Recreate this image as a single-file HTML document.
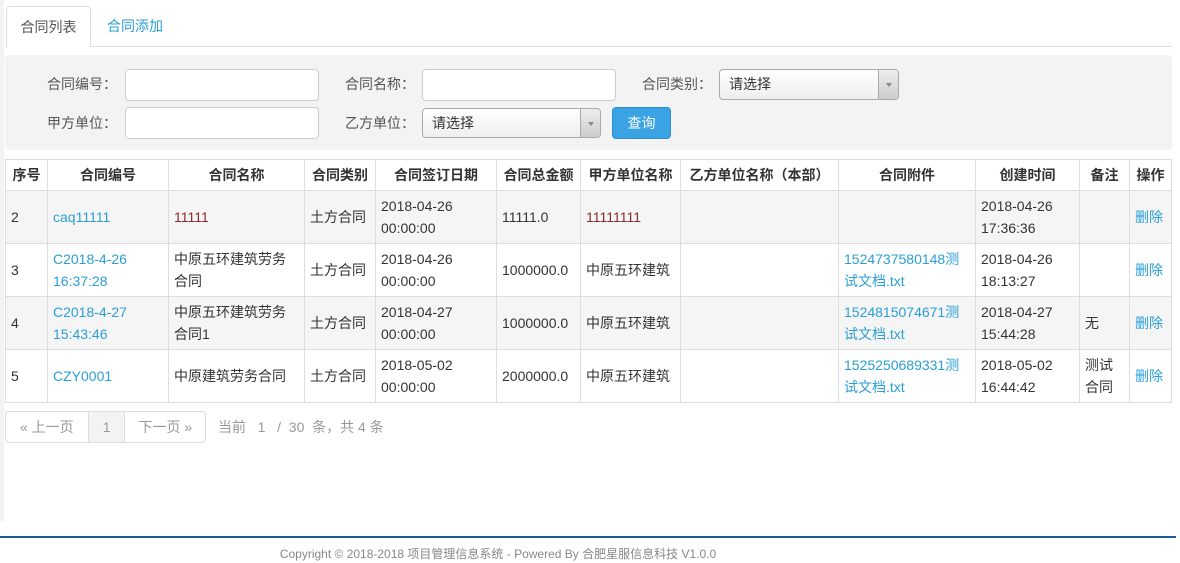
<!DOCTYPE html><html><head><meta charset="utf-8"><style>
*{box-sizing:border-box;margin:0;padding:0}
body{width:1180px;height:563px;background:#fff;font-family:"Liberation Sans","Noto Sans CJK SC",sans-serif;font-size:14px;color:#333;position:relative;overflow:hidden}
.a{position:absolute}
.strip{left:0;top:0;width:4px;height:521px;background:#f3f3f3}
.tab{top:6px;left:6px;width:85px;height:41px;border:1px solid #ddd;border-bottom:none;border-radius:4px 4px 0 0;background:#fff;text-align:center;line-height:40px;color:#555;z-index:2}
.tab2{top:6px;left:107px;line-height:40px;color:#2a9fd6}
.tline{top:46px;left:6px;width:1166px;height:1px;background:#ddd}
.panel{left:5px;top:55px;width:1167px;height:95px;background:#f3f3f3;border-radius:4px}
.lbl{color:#555;text-align:right;width:90px}
.inp{background:#fff;border:1px solid #ccc;border-radius:4px}
.sel{background:linear-gradient(#fff,#eee);border:1px solid #aaa;border-radius:4px;padding-left:9px;line-height:28px;color:#333}
.sel i{position:absolute;right:0;top:0;width:20px;height:100%;border-left:1px solid #aaa;background:linear-gradient(#eee,#ccc);border-radius:0 4px 4px 0}
.sel i:after{content:"";position:absolute;left:7px;top:13px;border:3px solid transparent;border-top:4px solid #888}
.btn{left:612px;top:107px;width:59px;height:32px;background:#3aa3e3;border:1px solid #2b8fcf;border-radius:4px;color:#fff;text-align:center;line-height:30px}
table{position:absolute;left:5px;top:159px;width:1167px;border-collapse:collapse;border:1px solid #ddd}
td,th{border:1px solid #ddd;padding:0 5px;font-size:14px;line-height:22px;vertical-align:middle;text-align:left}
th{height:31px;font-weight:bold;text-align:center;color:#333;background:#fff}
td{height:53px}
tr.g td{background:#f5f5f5}
.l{color:#2a9fd6}.r{color:#8b2a2a}
.pg{top:411px;left:5px;height:32px;border:1px solid #ddd;border-radius:4px;display:flex;color:#999}
.pg div{line-height:30px;padding:0 13px;border-right:1px solid #ddd}
.pi{top:412px;left:218px;color:#999;line-height:30px}
.foot{left:0;top:536px;width:1176px;height:2px;background:#1f5c93}
.ft{top:545px;left:0;width:996px;text-align:center;font-size:12px;color:#888}
</style></head><body>
<div class="a strip"></div>
<div class="a tline"></div>
<div class="a tab">合同列表</div>
<div class="a tab2">合同添加</div>
<div class="a panel"></div>
<div class="a lbl" style="left:27px;top:74px">合同编号：</div>
<div class="a inp" style="left:125px;top:69px;width:194px;height:32px"></div>
<div class="a lbl" style="left:325px;top:74px">合同名称：</div>
<div class="a inp" style="left:422px;top:69px;width:194px;height:32px"></div>
<div class="a lbl" style="left:622px;top:74px">合同类别：</div>
<div class="a sel" style="left:719px;top:69px;width:180px;height:31px">请选择<i></i></div>
<div class="a lbl" style="left:27px;top:113px">甲方单位：</div>
<div class="a inp" style="left:125px;top:107px;width:194px;height:32px"></div>
<div class="a lbl" style="left:325px;top:113px">乙方单位：</div>
<div class="a sel" style="left:422px;top:108px;width:179px;height:30px">请选择<i></i></div>
<div class="a btn">查询</div>
<table>
<tr><th style="width:42px">序号</th><th style="width:121px">合同编号</th><th style="width:136px">合同名称</th><th style="width:71px">合同类别</th><th style="width:121px">合同签订日期</th><th style="width:84px">合同总金额</th><th style="width:100px">甲方单位名称</th><th style="width:158px">乙方单位名称（本部）</th><th style="width:137px">合同附件</th><th style="width:104px">创建时间</th><th style="width:50px">备注</th><th>操作</th></tr>
<tr class="g"><td>2</td><td class="l">caq11111</td><td class="r">11111</td><td>土方合同</td><td>2018-04-26<br>00:00:00</td><td>11111.0</td><td class="r">11111111</td><td></td><td></td><td>2018-04-26<br>17:36:36</td><td></td><td class="l">删除</td></tr>
<tr><td>3</td><td class="l">C2018-4-26<br>16:37:28</td><td>中原五环建筑劳务<br>合同</td><td>土方合同</td><td>2018-04-26<br>00:00:00</td><td>1000000.0</td><td>中原五环建筑</td><td></td><td class="l">1524737580148测<br>试文档.txt</td><td>2018-04-26<br>18:13:27</td><td></td><td class="l">删除</td></tr>
<tr class="g"><td>4</td><td class="l">C2018-4-27<br>15:43:46</td><td>中原五环建筑劳务<br>合同1</td><td>土方合同</td><td>2018-04-27<br>00:00:00</td><td>1000000.0</td><td>中原五环建筑</td><td></td><td class="l">1524815074671测<br>试文档.txt</td><td>2018-04-27<br>15:44:28</td><td>无</td><td class="l">删除</td></tr>
<tr><td>5</td><td class="l">CZY0001</td><td>中原建筑劳务合同</td><td>土方合同</td><td>2018-05-02<br>00:00:00</td><td>2000000.0</td><td>中原五环建筑</td><td></td><td class="l">1525250689331测<br>试文档.txt</td><td>2018-05-02<br>16:44:42</td><td>测试<br>合同</td><td class="l">删除</td></tr>
</table>
<div class="a pg"><div style="padding:0 14px">« 上一页</div><div style="background:#f3f3f3;padding:0 14px">1</div><div style="border:none">下一页 »</div></div>
<div class="a pi">当前 &nbsp;&nbsp;1 &nbsp;&nbsp;/ &nbsp;30 &nbsp;条，共 4 条</div>
<div class="a foot"></div>
<div class="a ft">Copyright © 2018-2018 项目管理信息系统 - Powered By 合肥星服信息科技 V1.0.0</div>
</body></html>
